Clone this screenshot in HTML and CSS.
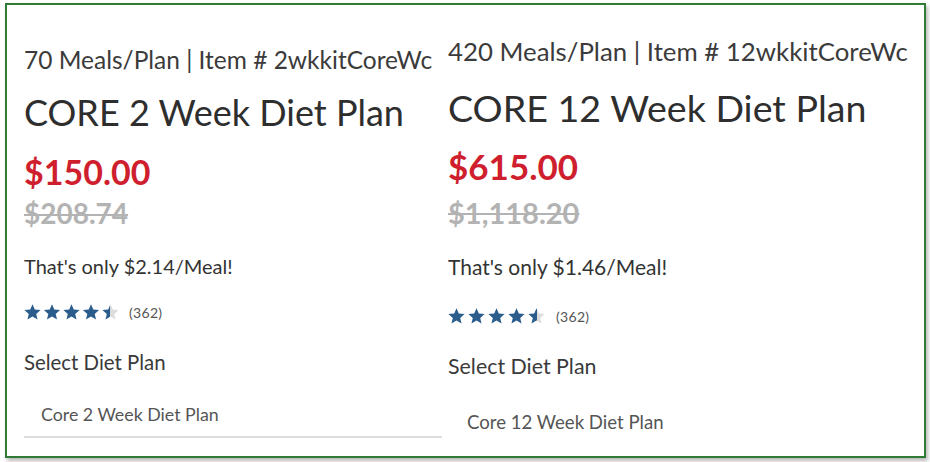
FILE: index.html
```html
<!DOCTYPE html>
<html lang="en">
<head>
<meta charset="utf-8">
<title>CORE Diet Plans</title>
<link rel="stylesheet" href="styles.css">
</head>
<body>
<div class="frame">
  <div class="plans">
    <section class="plan plan-a">
      <p class="meta">70 Meals/Plan | Item # 2wkkitCoreWc</p>
      <h2 class="title">CORE 2 Week Diet Plan</h2>
      <p class="price">$150.00</p>
      <p class="was">$208.74</p>
      <p class="per">That's only $2.14/Meal!</p>
      <div class="rating">
        <svg class="stars" width="98" height="17" viewBox="0 0 98 17" aria-hidden="true">
          <defs>
            <linearGradient id="halfA" x1="0" x2="1" y1="0" y2="0">
              <stop offset="50%" stop-color="#2b5d8c"/>
              <stop offset="50%" stop-color="#dcdcdc"/>
            </linearGradient>
            <path id="starA" d="M8.5 0.3l2.3 5.3 5.8.5-4.4 3.8 1.35 5.7-5.05-3-5.05 3 1.35-5.7L0.4 6.1l5.8-.5z"/>
          </defs>
          <use href="#starA" x="0" y="0" fill="#2b5d8c"/>
          <use href="#starA" x="19.5" y="0" fill="#2b5d8c"/>
          <use href="#starA" x="39" y="0" fill="#2b5d8c"/>
          <use href="#starA" x="58.5" y="0" fill="#2b5d8c"/>
          <use href="#starA" x="78" y="0" fill="url(#halfA)"/>
        </svg>
        <span class="count">(362)</span>
      </div>
      <p class="label">Select Diet Plan</p>
      <div class="select">Core 2 Week Diet Plan</div>
    </section>
    <section class="plan plan-b">
      <p class="meta">420 Meals/Plan | Item # 12wkkitCoreWc</p>
      <h2 class="title">CORE 12 Week Diet Plan</h2>
      <p class="price">$615.00</p>
      <p class="was">$1,118.20</p>
      <p class="per">That's only $1.46/Meal!</p>
      <div class="rating">
        <svg class="stars" width="100" height="17" viewBox="0 0 100 17" aria-hidden="true">
          <defs>
            <linearGradient id="halfB" x1="0" x2="1" y1="0" y2="0">
              <stop offset="50%" stop-color="#2b5d8c"/>
              <stop offset="50%" stop-color="#dcdcdc"/>
            </linearGradient>
            <path id="starB" d="M8.5 0.3l2.3 5.3 5.8.5-4.4 3.8 1.35 5.7-5.05-3-5.05 3 1.35-5.7L0.4 6.1l5.8-.5z"/>
          </defs>
          <use href="#starB" x="0" y="0" fill="#2b5d8c"/>
          <use href="#starB" x="20" y="0" fill="#2b5d8c"/>
          <use href="#starB" x="40" y="0" fill="#2b5d8c"/>
          <use href="#starB" x="60" y="0" fill="#2b5d8c"/>
          <use href="#starB" x="80" y="0" fill="url(#halfB)"/>
        </svg>
        <span class="count">(362)</span>
      </div>
      <p class="label">Select Diet Plan</p>
      <div class="select select-open">Core 12 Week Diet Plan</div>
    </section>
  </div>
</div>
</body>
</html>
```
FILE: styles.css
```css
html, body {
  margin: 0;
  padding: 0;
  background: #ffffff;
}

body {
  font-family: Lato, "Noto Sans", sans-serif;
  color: #333333;
  width: 930px;
  height: 462px;
  overflow: hidden;
}

.frame {
  box-sizing: border-box;
  margin: 3px 0 0 5px;
  width: 921px;
  height: 455px;
  border: 2px solid #2f7a35;
  background: #ffffff;
  box-shadow: 2px 3px 4px rgba(0, 0, 0, 0.28);
  overflow: hidden;
}

.plans {
  display: grid;
  grid-template-columns: 418px 1fr;
  column-gap: 6px;
  padding-left: 17px;
}

.plan {
  display: flex;
  flex-direction: column;
  align-items: flex-start;
}

.plan p,
.plan h2 {
  margin: 0;
  line-height: 1.2;
  white-space: nowrap;
}

.meta {
  font-size: 24.5px;
  color: #3b3b3b;
  margin-top: 40.3px !important;
}

.title {
  font-size: 36px;
  font-weight: 400;
  color: #2e2e2e;
  margin-top: 16.8px !important;
}

.price {
  font-size: 34px;
  font-weight: 700;
  color: #cf1f2e;
  margin-top: 17.7px !important;
}

.was {
  font-size: 28px;
  font-weight: 700;
  color: #b3b3b3;
  text-decoration: line-through;
  text-decoration-thickness: 2px;
  margin-top: 3.7px !important;
}

.per {
  font-size: 20px;
  color: #333333;
  margin-top: 23.8px !important;
}

.rating {
  display: flex;
  align-items: center;
  gap: 7px;
  height: 17px;
  margin-top: 26.2px;
}

.stars {
  display: block;
}

.count {
  font-size: 14px;
  letter-spacing: 0.3px;
  color: #555555;
  line-height: 17px;
}

.label {
  font-size: 20.4px;
  color: #3a3a3a;
  margin-top: 28.4px !important;
}

.select {
  box-sizing: border-box;
  width: 418px;
  margin-top: 30px;
  padding: 0 0 10px 17px;
  font-size: 17.8px;
  line-height: 1.2;
  color: #555555;
  border-bottom: 2px solid #dddddd;
}

.select-open {
  border-bottom: none;
}

/* right column was captured at a slightly larger scale */
.plan-b .meta {
  font-size: 25.8px;
  margin-top: 30.5px !important;
}

.plan-b .title {
  font-size: 37.6px;
  margin-top: 18.7px !important;
}

.plan-b .price {
  font-size: 35px;
  margin-top: 14.7px !important;
}

.plan-b .was {
  font-size: 29px;
  margin-top: 9.4px !important;
}

.plan-b .per {
  font-size: 21px;
  margin-top: 23.1px !important;
}

.plan-b .rating {
  gap: 8px;
  margin-top: 28.5px;
}

.plan-b .label {
  font-size: 21.4px;
  margin-top: 28.9px !important;
}

.plan-b .select {
  font-size: 18.6px;
  margin-top: 31.5px;
  padding-left: 19px;
}
```
